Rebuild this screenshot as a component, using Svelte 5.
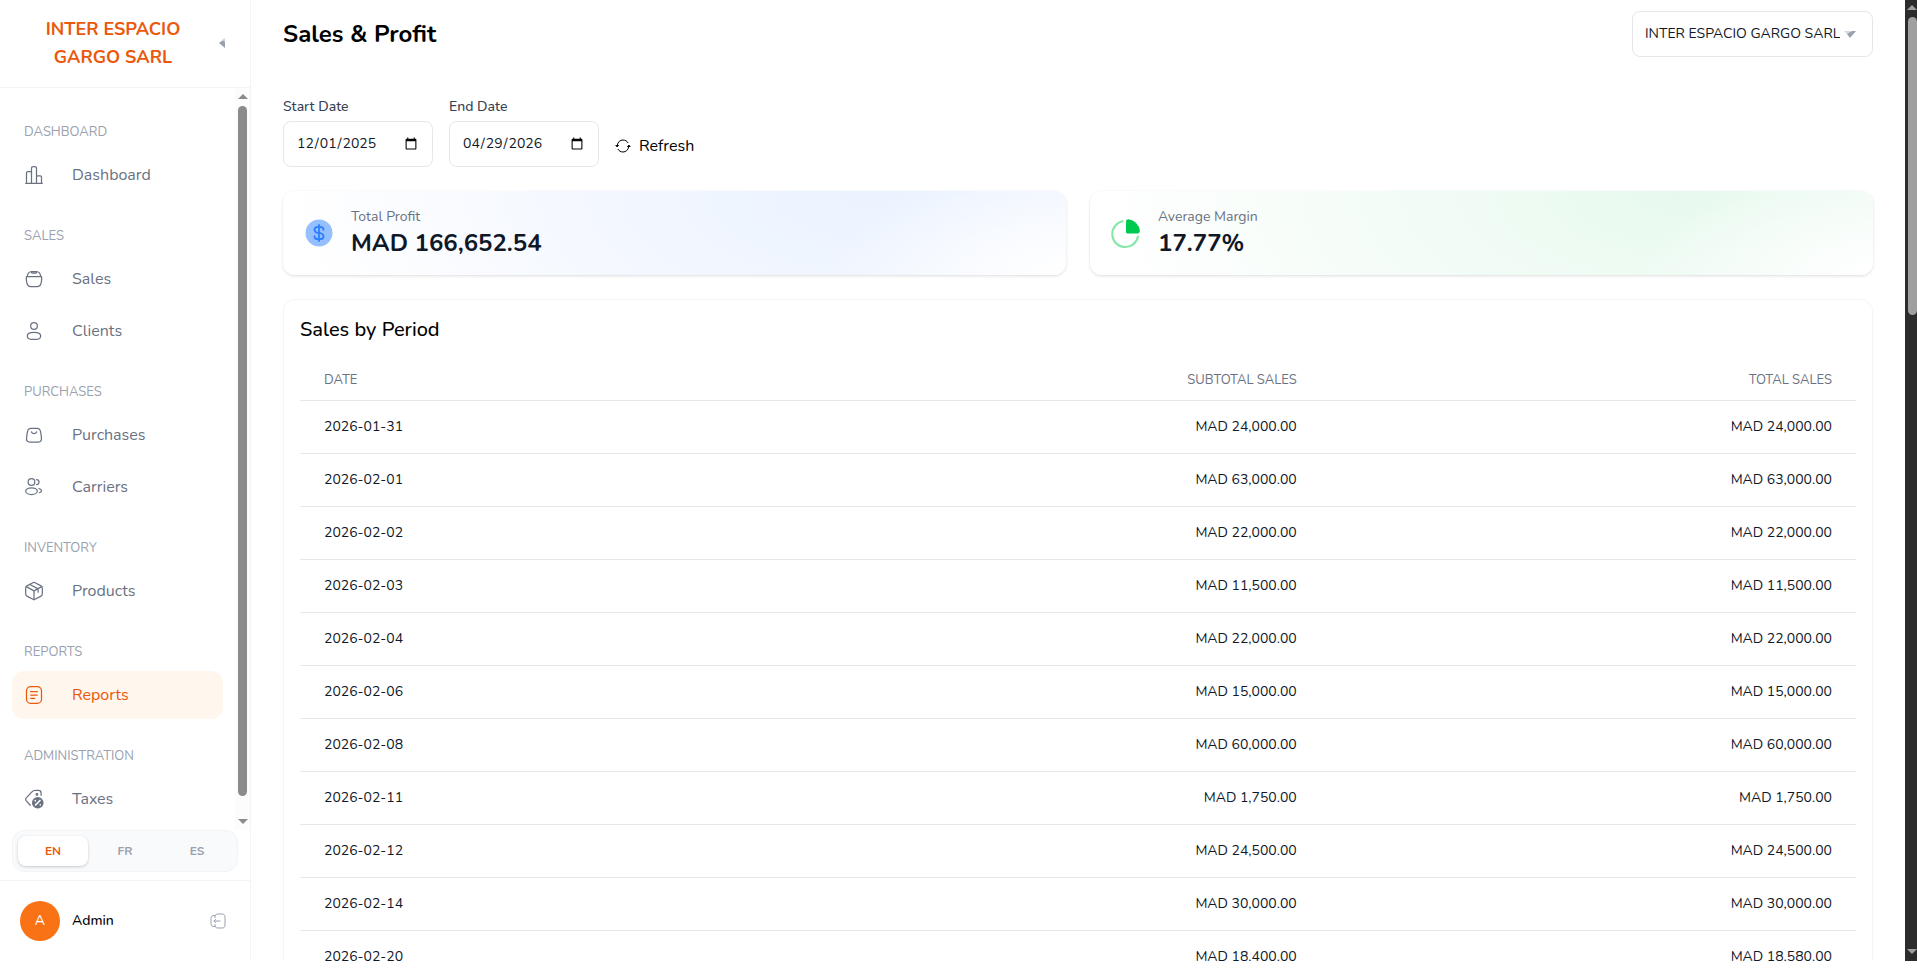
<script lang="ts">
	type Item = { label: string; icon: string; active?: boolean };

	const groups: { title: string; items: Item[] }[] = [
		{ title: 'DASHBOARD', items: [{ label: 'Dashboard', icon: 'chart' }] },
		{ title: 'SALES', items: [{ label: 'Sales', icon: 'basket' }, { label: 'Clients', icon: 'user' }] },
		{ title: 'PURCHASES', items: [{ label: 'Purchases', icon: 'bag' }, { label: 'Carriers', icon: 'users' }] },
		{ title: 'INVENTORY', items: [{ label: 'Products', icon: 'box' }] },
		{ title: 'REPORTS', items: [{ label: 'Reports', icon: 'report', active: true }] },
		{ title: 'ADMINISTRATION', items: [{ label: 'Taxes', icon: 'tax' }] }
	];

	const languages = ['EN', 'FR', 'ES'];
	let language = $state('EN');

	let startDate = $state('2025-12-01');
	let endDate = $state('2026-04-29');

	const rows = [
		['2026-01-31', 24000, 24000],
		['2026-02-01', 63000, 63000],
		['2026-02-02', 22000, 22000],
		['2026-02-03', 11500, 11500],
		['2026-02-04', 22000, 22000],
		['2026-02-06', 15000, 15000],
		['2026-02-08', 60000, 60000],
		['2026-02-11', 1750, 1750],
		['2026-02-12', 24500, 24500],
		['2026-02-14', 30000, 30000],
		['2026-02-20', 18400, 18580]
	] as [string, number, number][];

	const money = (n: number) => 'MAD ' + n.toLocaleString('en-US', { minimumFractionDigits: 2 });
</script>

{#snippet icon(name: string)}
	<svg class="icon" viewBox="0 0 24 24" fill="none" stroke="currentColor" stroke-width="1.5" stroke-linecap="round" stroke-linejoin="round" aria-hidden="true">
		{#if name === 'chart'}
			<path d="M22 22H2M21 22v-7.5a1.5 1.5 0 0 0-1.5-1.5h-3a1.5 1.5 0 0 0-1.5 1.5V22M15 22V5c0-1.4 0-2.1-.44-2.56C14.12 2 13.4 2 12 2s-2.12 0-2.56.44C9 2.88 9 3.6 9 5v17M9 22V9.5A1.5 1.5 0 0 0 7.5 8h-3A1.5 1.5 0 0 0 3 9.5V22" />
		{:else if name === 'basket'}
			<path d="M3 9h18c.5 2.3.3 4-.2 6.500l-.5 2c-.6 2.600-1.800 3.500-4.300 3.500H8c-2.500 0-3.700-.9-4.300-3.500l-.5-2C2.700 13 2.500 11.300 3 9z" />
			<path d="M4 8.700C4.500 5 6 3.200 9 3h6c3 .2 4.500 2 5 5.700M8.500 3.300c0 1 .7 1.700 1.700 1.700h3.600c1 0 1.700-.7 1.700-1.700" />
		{:else if name === 'user'}
			<circle cx="12" cy="6" r="4" />
			<path d="M12 13.500c4.800 0 8 1.600 8 4.300 0 2.700-1.800 4.200-4.500 4.200h-7C5.800 22 4 20.500 4 17.800c0-2.700 3.200-4.300 8-4.300z" />
		{:else if name === 'bag'}
			<path d="M4 8.500C4.500 5.300 5.600 4 8.300 4h7.400c2.700 0 3.800 1.300 4.300 4.500l.9 6.500c.5 3.500-.6 5.500-4 5.500H7.100c-3.400 0-4.500-2-4-5.500z" />
			<path d="M9 8.300c.5 1.300 1.600 2.100 3 2.100s2.500-.8 3-2.100" />
		{:else if name === 'users'}
			<circle cx="9" cy="6" r="4" />
			<path d="M15 9a3 3 0 1 0 0-6" />
			<ellipse cx="9" cy="17" rx="7" ry="4" />
			<path d="M18 14c1.750.380 3 1.360 3 2.500 0 1.030-1.010 1.920-2.500 2.370" />
		{:else if name === 'box'}
			<path d="M12 1.500 20 5.500c1.400.7 2 1.600 2 3.200v6.600c0 1.600-.6 2.500-2 3.200l-8 4-8-4c-1.400-.7-2-1.600-2-3.200V8.700c0-1.600.6-2.500 2-3.200z" />
			<path d="m2.800 6.800 9.200 5 9.200-5M12 11.800v10.400M7 4.200l10 5.200v4" />
		{:else if name === 'report'}
			<rect x="3" y="2" width="18" height="20" rx="5" />
			<path d="M8 8h8M8 12h8M8 16h5" />
		{:else if name === 'tax'}
			<path d="M7.500 19.500 2.500 14c-.8-1-.8-2 0-3l7-7.500C10.700 2.200 12 1.700 13.700 1.700h3.600c2.200 0 3.200 1 3.200 3.200v2.600" />
			<circle cx="15.500" cy="6.500" r="1" />
			<circle cx="16.500" cy="16.500" r="7" fill="currentColor" stroke="none" />
			<path class="cut" d="m13.800 19.200 5.400-5.400M13.500 14h.01M19.500 19h.01" />
		{/if}
	</svg>
{/snippet}

<div class="screen">
	<aside class="sidebar">
		<div class="brand">
			<h2>INTER ESPACIO GARGO SARL</h2>
			<button class="collapse" aria-label="Collapse menu">
				<svg viewBox="0 0 6 10" aria-hidden="true">
					<path d="M0 5 4 2l2 1v7z" fill="#99a1af" />
					<path d="m3 2 3-2v4z" fill="#d1d5dc" />
				</svg>
			</button>
		</div>

		<div class="menu">
			<nav>
				{#each groups as group}
					<h3>{group.title}</h3>
					<ul>
						{#each group.items as item}
							<li>
								<a href="#{item.icon}" class:active={item.active}>
									{@render icon(item.icon)}
									<span>{item.label}</span>
								</a>
							</li>
						{/each}
					</ul>
				{/each}
			</nav>
			<div class="scrollbar light" aria-hidden="true">
				<i class="up"></i>
				<i class="thumb"></i>
				<i class="down"></i>
			</div>
		</div>

		<div class="languages">
			{#each languages as code}
				<button class:selected={language === code} onclick={() => (language = code)}>{code}</button>
			{/each}
		</div>

		<div class="account">
			<span class="avatar">A</span>
			<span class="name">Admin</span>
			<button class="logout" aria-label="Log out">
				<svg viewBox="0 0 16 16" fill="none" stroke="currentColor" stroke-linecap="round" stroke-linejoin="round" aria-hidden="true">
					<path d="M5 4.500V4c0-2 .8-3 3-3h4c2 0 3 1 3 3v8c0 2-1 3-3 3H8c-2.200 0-3-1-3-3v-.5" />
					<path d="M5 2.500H4C2 2.500 1 3.500 1 5.500v5c0 2 1 3 3 3h1M10 8H4M5.500 6.500 4 8l1.500 1.500" />
				</svg>
			</button>
		</div>
	</aside>

	<main>
		<header>
			<h1>Sales &amp; Profit</h1>
			<div class="company">
				<select aria-label="Company">
					<option>INTER ESPACIO GARGO SARL</option>
				</select>
				<svg viewBox="0 0 12 7" aria-hidden="true">
					<path d="M0 0h7L3 3z" fill="#d1d5dc" />
					<path d="M3 3 6 1l2-1h4L6 7z" fill="#99a1af" />
				</svg>
			</div>
		</header>

		<form class="filters">
			<div class="field">
				<label for="start">Start Date</label>
				<input id="start" type="date" bind:value={startDate} />
			</div>
			<div class="field">
				<label for="end">End Date</label>
				<input id="end" type="date" bind:value={endDate} />
			</div>
			<button type="button" class="refresh">
				<svg viewBox="0 0 16 16" fill="none" stroke="currentColor" stroke-linecap="round" aria-hidden="true">
					<path d="M2.300 7C2.800 4 5.100 2 8 2c2.200 0 4 1 5 2.700M13.700 9c-.5 3-2.800 5-5.700 5-2.200 0-4-1-5-2.700" />
					<path d="M1.200 7.500h2.300L2.300 8.600zM14.800 8.500h-2.300l1.200-1.100z" fill="currentColor" />
				</svg>
				Refresh
			</button>
		</form>

		<section class="stats">
			<article class="stat blue">
				<svg viewBox="0 0 32 32" fill="none" aria-hidden="true">
					<circle cx="16" cy="16" r="13.500" fill="#95bfff" />
					<path d="M16 8v16M20.500 12.800c0-1.800-1.600-3-3.500-3h-2c-1.900 0-3.500 1.200-3.500 3s1.600 2.700 3.500 3.200h2c1.900.5 3.500 1.400 3.500 3.200s-1.600 3-3.500 3h-2c-1.900 0-3.500-1.200-3.500-3" class="dollar" />
				</svg>
				<div>
					<p class="caption">Total Profit</p>
					<p class="figure">MAD 166,652.54</p>
				</div>
			</article>
			<article class="stat green">
				<svg viewBox="0 0 32 32" fill="none" aria-hidden="true">
					<path d="M12.800 4.300A13 13 0 1 0 28 19.500" stroke="#84e7aa" stroke-width="2" stroke-linecap="round" />
					<path d="M16 4.500C16 3 17 2 18.500 2.200A13.500 13.500 0 0 1 29.900 13.800C30 15.200 29 16.400 27.500 16.400h-10c-.9 0-1.500-.6-1.500-1.500z" fill="#00c950" />
				</svg>
				<div>
					<p class="caption">Average Margin</p>
					<p class="figure">17.77%</p>
				</div>
			</article>
		</section>

		<section class="panel">
			<h2>Sales by Period</h2>
			<table>
				<thead>
					<tr>
						<th>DATE</th>
						<th>SUBTOTAL SALES</th>
						<th>TOTAL SALES</th>
					</tr>
				</thead>
				<tbody>
					{#each rows as [date, subtotal, total]}
						<tr>
							<td>{date}</td>
							<td>{money(subtotal)}</td>
							<td>{money(total)}</td>
						</tr>
					{/each}
				</tbody>
			</table>
		</section>
	</main>

	<div class="scrollbar dark" aria-hidden="true">
		<i class="up"></i>
		<i class="thumb"></i>
		<i class="down"></i>
	</div>
</div>

<style>
	:global(body) {
		background: #fff;
	}

	.screen {
		display: flex;
		height: calc(100vh - 9px);
		overflow: hidden;
		font-family: Nunito, Lato, "Liberation Sans", sans-serif;
		font-size: 14px;
		line-height: 20px;
		color: #101828;
	}

	.screen * {
		box-sizing: border-box;
	}

	h1, h2, h3, p, ul {
		margin: 0;
		padding: 0;
	}

	button, input, select {
		font: inherit;
		color: inherit;
	}

	button {
		border: 0;
		background: none;
		padding: 0;
	}

	.sidebar {
		display: flex;
		flex-direction: column;
		flex: none;
		width: 251px;
		border-right: 1px solid #f3f4f6;
	}

	.brand {
		display: flex;
		align-items: center;
		height: 88px;
		padding: 0 25px 2px 32px;
		border-bottom: 1px solid #f3f4f6;
	}

	.brand h2 {
		flex: 1;
		padding-right: 25px;
		font-size: 18px;
		line-height: 28px;
		font-weight: 700;
		text-align: center;
		color: #ea580c;
	}

	.collapse svg {
		display: block;
		width: 6px;
		height: 10px;
	}

	.menu {
		display: flex;
		flex: 1;
		min-height: 0;
	}

	nav {
		flex: 1;
		padding: 7px 12px 0;
		overflow: hidden;
	}

	nav h3 {
		margin: 25px 0 7px;
		padding-left: 12px;
		font-size: 13px;
		line-height: 24px;
		font-weight: 400;
		color: #99a1af;
	}

	nav ul {
		display: flex;
		flex-direction: column;
		gap: 4px;
		list-style: none;
	}

	nav a {
		display: flex;
		align-items: center;
		gap: 28px;
		height: 48px;
		padding-left: 12px;
		border-radius: 12px;
		font-size: 16px;
		line-height: 24px;
		color: #6a7282;
		text-decoration: none;
	}

	nav a.active {
		background: #fff7ed;
		color: #ea580c;
	}

	.icon {
		width: 20px;
		height: 20px;
	}

	.cut {
		stroke: #fff;
		stroke-width: 2;
	}

	.languages {
		display: flex;
		gap: 2px;
		height: 42px;
		margin: 0 12px 8px;
		padding: 5px;
		border: 1px solid #f3f4f6;
		border-radius: 12px;
		background: #f9fafb;
	}

	.languages button {
		flex: 1;
		border-radius: 8px;
		font-size: 12px;
		line-height: 16px;
		font-weight: 700;
		color: #99a1af;
	}

	.languages .selected {
		background: #fff;
		color: #ea580c;
		box-shadow: 0 1px 3px rgba(0, 0, 0, 0.2);
	}

	.account {
		display: flex;
		align-items: center;
		gap: 12px;
		height: 81px;
		padding: 0 24px 0 20px;
		border-top: 1px solid #f3f4f6;
	}

	.avatar {
		width: 40px;
		border-radius: 50%;
		background: #f97316;
		line-height: 40px;
		font-weight: 500;
		text-align: center;
		color: #fff;
	}

	.name {
		flex: 1;
		font-weight: 500;
		color: #000;
	}

	.logout svg {
		display: block;
		width: 16px;
		height: 16px;
		color: #99a1af;
	}

	.scrollbar {
		display: flex;
		flex-direction: column;
		align-items: center;
		flex: none;
	}

	.scrollbar .up, .scrollbar .down {
		border: 5px solid transparent;
	}

	.scrollbar .up {
		border-top: 0;
		border-bottom-color: currentColor;
	}

	.scrollbar .down {
		margin-top: auto;
		border-bottom: 0;
		border-top-color: currentColor;
	}

	.scrollbar .thumb {
		width: 9px;
		border-radius: 5px;
		background: currentColor;
	}

	.light {
		width: 15px;
		padding: 6px 0;
		background: #fcfcfc;
		color: #8b8b8b;
	}

	.light .thumb {
		flex: 1;
		margin: 7px 0 23px;
	}

	.dark {
		align-items: flex-end;
		width: 12px;
		padding: 5px 0 7px;
		background: #2c2c2c;
		color: #9f9f9f;
	}

	.dark .thumb {
		height: 31.4%;
		margin-top: 7px;
	}

	main {
		flex: 1;
		padding: 0 32px;
		overflow: hidden;
	}

	header {
		display: flex;
		align-items: center;
		justify-content: space-between;
		height: 68px;
	}

	h1 {
		font-size: 24px;
		line-height: 32px;
		font-weight: 700;
		color: #000;
	}

	.company {
		position: relative;
	}

	.company select {
		appearance: none;
		width: 241px;
		height: 46px;
		padding: 0 32px 0 12px;
		border: 1px solid #e5e7eb;
		border-radius: 8px;
		background: #fff;
	}

	.company svg {
		position: absolute;
		top: 20px;
		right: 17px;
		width: 12px;
		height: 7px;
		pointer-events: none;
	}

	.filters {
		display: flex;
		align-items: flex-end;
		gap: 16px;
		margin-top: 29px;
	}

	.field {
		width: 150px;
	}

	.field label {
		display: block;
		margin-bottom: 4px;
		font-weight: 500;
		color: #364153;
	}

	.field input {
		display: block;
		width: 100%;
		height: 46px;
		padding: 0 12px;
		border: 1px solid #e5e7eb;
		border-radius: 8px;
		background: #fff;
	}

	.refresh {
		display: flex;
		align-items: center;
		gap: 8px;
		height: 42px;
		font-size: 16px;
		line-height: 24px;
		color: #000;
	}

	.refresh svg {
		width: 16px;
		height: 16px;
	}

	.stats {
		display: grid;
		grid-template-columns: 1fr 1fr;
		gap: 24px;
		margin: 24px 0;
	}

	.stat {
		display: flex;
		align-items: center;
		gap: 16px;
		height: 84px;
		padding: 0 20px;
		border-radius: 12px;
		box-shadow: 0 1px 3px rgba(0, 0, 0, 0.14);
	}

	.stat svg {
		width: 32px;
		height: 32px;
	}

	.dollar {
		stroke: #2b7fff;
		stroke-width: 1.8;
		stroke-linecap: round;
	}

	.blue {
		background:
			radial-gradient(ellipse 30% 130% at 100% 100%, #fff, transparent),
			radial-gradient(ellipse 75% 340% at 75% 0, #eaf3ff, #f3f7ff 45%, #fff);
	}

	.green {
		background:
			radial-gradient(ellipse 30% 130% at 100% 100%, #fff, transparent),
			radial-gradient(ellipse 75% 340% at 75% 0, #e7f9ee, #f2fcf6 45%, #fff);
	}

	.caption {
		color: #6a7282;
	}

	.figure {
		font-size: 24px;
		line-height: 32px;
		font-weight: 700;
	}

	.panel {
		padding: 16px;
		border: 1px solid #f3f4f6;
		border-radius: 12px;
	}

	.panel h2 {
		margin-bottom: 16px;
		font-size: 20px;
		line-height: 28px;
		font-weight: 500;
		color: #000;
	}

	table {
		width: 100%;
		border-collapse: collapse;
	}

	th, td {
		padding: 0 24px;
		border-bottom: 1px solid #e5e7eb;
		text-align: right;
	}

	th {
		height: 40px;
		font-size: 13px;
		line-height: 16px;
		font-weight: 400;
		color: #6a7282;
	}

	td {
		height: 53px;
	}

	th:first-child, td:first-child {
		text-align: left;
	}

	th:last-child {
		width: 34.4%;
	}
</style>
